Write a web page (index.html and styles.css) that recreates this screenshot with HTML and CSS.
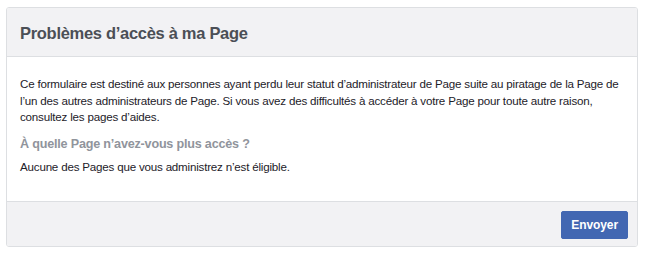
FILE: index.html
```html
<!DOCTYPE html>
<html lang="fr">
<head>
<meta charset="utf-8">
<link rel="stylesheet" href="styles.css">
</head>
<body>
<div class="page">
  <div class="dialog">
    <div class="dialog-header">Problèmes d’accès à ma Page</div>
    <div class="dialog-body">
      <p class="intro">Ce formulaire est destiné aux personnes ayant perdu leur statut d’administrateur de Page suite au piratage de la Page de l’un des autres administrateurs de Page. Si vous avez des difficultés à accéder à votre Page pour toute autre raison, consultez les pages d’aides.</p>
      <h3 class="question">À quelle Page n’avez-vous plus accès ?</h3>
      <p class="note">Aucune des Pages que vous administrez n’est éligible.</p>
    </div>
    <div class="dialog-footer">
      <button class="btn-primary">Envoyer</button>
    </div>
  </div>
</div>
</body>
</html>
```

FILE: styles.css
```css
html, body {
  margin: 0;
  padding: 0;
  background: #fff;
}
body {
  font-family: Helvetica, "Liberation Sans", Arial, sans-serif;
  color: #1d2129;
}
.page {
  padding: 7px 8px 6px 6px;
}
.dialog {
  border: 1px solid #dddfe2;
  border-radius: 3px;
  overflow: hidden;
  background: #fff;
}
.dialog-header {
  background: #f2f2f4;
  border-bottom: 1px solid #dddfe2;
  height: 48px;
  line-height: 50px;
  padding: 0 13px;
  font-size: 16.5px;
  letter-spacing: -0.3px;
  font-weight: bold;
  color: #4b4f56;
}
.dialog-body {
  padding: 18px 13px 22px;
  height: 104px;
}
.intro {
  margin: 0;
  font-size: 11.6px;
  letter-spacing: -0.2px;
  line-height: 16.5px;
  padding-top: 1px;
}
.question {
  margin: 9px 0 0;
  font-size: 12.6px;
  letter-spacing: -0.2px;
  line-height: 18px;
  font-weight: bold;
  color: #90949c;
}
.note {
  margin: 6px 0 0;
  font-size: 11.6px;
  letter-spacing: -0.2px;
  line-height: 16px;
}
.dialog-footer {
  background: #f2f2f4;
  border-top: 1px solid #dddfe2;
  height: 44px;
  display: flex;
  justify-content: flex-end;
  align-items: center;
  padding: 0 9px;
}
.btn-primary {
  background: #4267b2;
  border: 1px solid #4267b2;
  border-radius: 2px;
  color: #fff;
  font-family: Helvetica, "Liberation Sans", Arial, sans-serif;
  font-weight: bold;
  font-size: 12px;
  letter-spacing: -0.1px;
  height: 28px;
  padding: 0 9px;
  margin-top: 1px;
}
```
